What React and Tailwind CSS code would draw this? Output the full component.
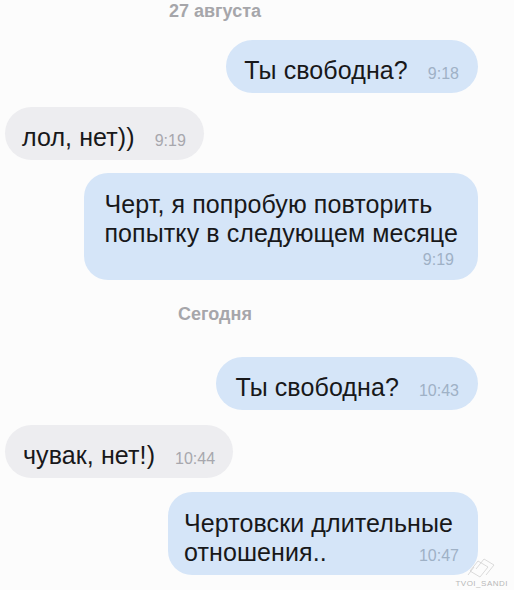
export default function App() {
  const blue = "bg-[#d5e5f8]";
  const gray = "bg-[#ededf0]";
  return (
    <div
      className="relative w-[514px] h-[590px] overflow-hidden bg-[#fcfcfc] text-[#18181a]"
      style={{ fontFamily: '"Liberation Sans", Arial, sans-serif' }}
    >
      <div className="flex flex-col pl-[5px] pr-[36px]">
        <div className="w-[420px] pt-[1px] text-center text-[18px] leading-[20px] font-bold text-[#a6a6aa]">
          27 августа
        </div>

        <div className={`mt-[19px] self-end flex items-baseline gap-[20px] rounded-full ${blue} pt-[16px] pb-[8px] pl-[18px] pr-[19px]`}>
          <span className="text-[25px] leading-[29px] tracking-[0.1px]">Ты свободна?</span>
          <span className="text-[16px] leading-[16px] text-[#9fb1c6]">9:18</span>
        </div>

        <div className={`mt-[14px] self-start flex items-baseline gap-[20px] rounded-full ${gray} pt-[16px] pb-[8px] pl-[17px] pr-[18px]`}>
          <span className="text-[25px] leading-[29px] tracking-[0.1px]">лол, нет))</span>
          <span className="text-[16px] leading-[16px] text-[#a7a7ad]">9:19</span>
        </div>

        <div className={`mt-[13px] self-end flex flex-col rounded-[24px] ${blue} pt-[17px] pb-[12px] pl-[20px] pr-[20px]`}>
          <div className="text-[25px] leading-[29px] tracking-[0.1px]">Черт, я попробую повторить</div>
          <div className="text-[25px] leading-[29px] tracking-[0.1px]">попытку в следующем месяце</div>
          <div className="mt-[4px] self-end pr-[4px] text-[16px] leading-[16px] text-[#9fb1c6]">9:19</div>
        </div>

        <div className="mt-[24px] w-[420px] text-center text-[18px] leading-[20px] font-bold text-[#a6a6aa]">
          Сегодня
        </div>

        <div className={`mt-[33px] self-end flex items-baseline gap-[20px] rounded-full ${blue} pt-[16px] pb-[8px] pl-[19px] pr-[19px]`}>
          <span className="text-[25px] leading-[29px] tracking-[0.1px]">Ты свободна?</span>
          <span className="text-[16px] leading-[16px] text-[#9fb1c6]">10:43</span>
        </div>

        <div className={`mt-[15px] self-start flex items-baseline gap-[20px] rounded-full ${gray} pt-[16px] pb-[8px] pl-[18px] pr-[18px]`}>
          <span className="text-[25px] leading-[29px] tracking-[0.1px]">чувак, нет!)</span>
          <span className="text-[16px] leading-[16px] text-[#a7a7ad]">10:44</span>
        </div>

        <div className={`mt-[14px] self-end flex flex-col rounded-[24px] ${blue} pt-[17px] pb-[8px] pl-[16px] pr-[25px]`}>
          <div className="text-[25px] leading-[29px] tracking-[0.1px]">Чертовски длительные</div>
          <div className="flex items-baseline justify-between gap-[20px]">
            <span className="text-[25px] leading-[29px] tracking-[0.1px]">отношения..</span>
            <span className="-mr-[6px] text-[16px] leading-[16px] text-[#9fb1c6]">10:47</span>
          </div>
        </div>
      </div>

      <div className="absolute right-[6px] bottom-[2px] flex flex-col items-center">
        <svg width="36" height="22" viewBox="0 0 36 22" fill="none" stroke="#d2d2d2" strokeWidth="0.8">
          <path d="M6 14 L14 4 L24 10 L16 20 Z" />
          <path d="M12 12 L20 2 L30 8 L22 18" />
          <path d="M4 18 L10 10" />
        </svg>
        <span className="text-[8px] leading-[9px] tracking-[0.5px] text-[#b8b8b8]">TVOI_SANDI</span>
      </div>
    </div>
  );
}
